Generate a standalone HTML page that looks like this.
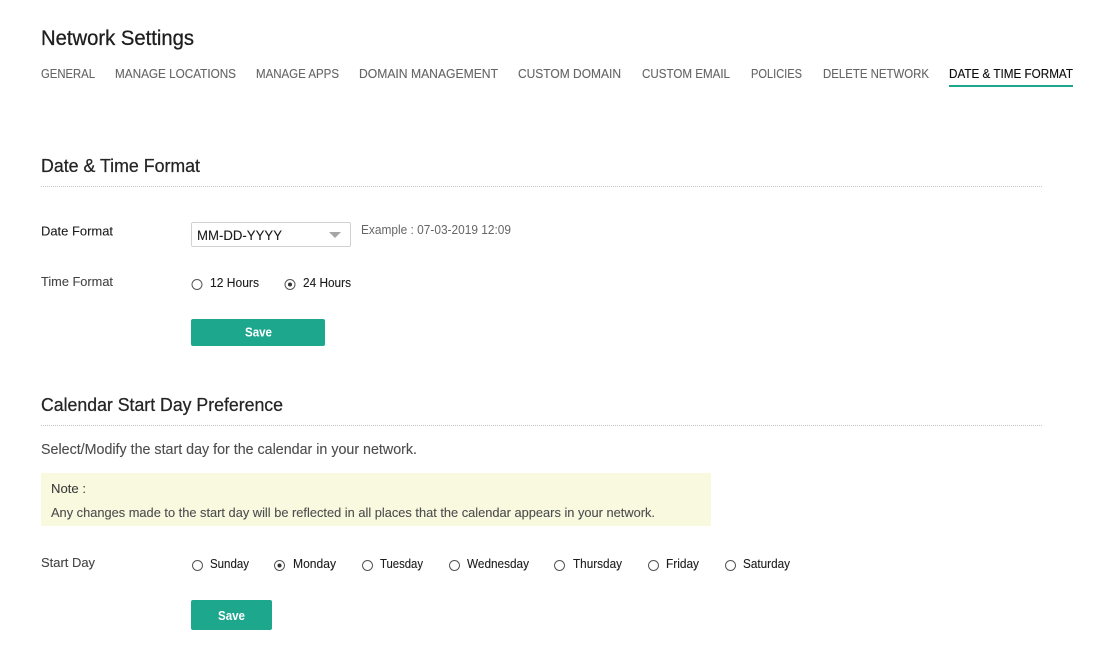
<!DOCTYPE html>
<html>
<head>
<meta charset="utf-8">
<title>Network Settings</title>
<style>
html,body{margin:0;padding:0;background:#fff;width:1105px;height:652px;overflow:hidden}
svg{display:block}
text{font-family:"Liberation Sans",sans-serif}
.tab{font-size:12.6px;fill:#666;stroke:#666;stroke-width:.12px}
.lbl{font-size:13px;fill:#444;stroke:#444;stroke-width:.1px}
.opt{font-size:12.5px;fill:#1c1c1c;stroke:#1c1c1c;stroke-width:.1px}
.h{font-size:18px;fill:#252525;stroke:#252525;stroke-width:.25px}
.sv{font-size:13px;font-weight:bold;fill:#fff}
</style>
</head>
<body>
<svg width="1105" height="652" viewBox="0 0 1105 652" xmlns="http://www.w3.org/2000/svg">
<rect width="1105" height="652" fill="#fff"/>
<text x="41" y="45" font-size="21" fill="#1e1e1e" stroke="#1e1e1e" stroke-width=".3" textLength="153" lengthAdjust="spacingAndGlyphs">Network Settings</text>

<text class="tab" x="41" y="78" textLength="54" lengthAdjust="spacingAndGlyphs">GENERAL</text>
<text class="tab" x="115" y="78" textLength="121" lengthAdjust="spacingAndGlyphs">MANAGE LOCATIONS</text>
<text class="tab" x="256" y="78" textLength="83" lengthAdjust="spacingAndGlyphs">MANAGE APPS</text>
<text class="tab" x="359" y="78" textLength="139" lengthAdjust="spacingAndGlyphs">DOMAIN MANAGEMENT</text>
<text class="tab" x="518" y="78" textLength="103" lengthAdjust="spacingAndGlyphs">CUSTOM DOMAIN</text>
<text class="tab" x="642" y="78" textLength="88" lengthAdjust="spacingAndGlyphs">CUSTOM EMAIL</text>
<text class="tab" x="751" y="78" textLength="51" lengthAdjust="spacingAndGlyphs">POLICIES</text>
<text class="tab" x="823" y="78" textLength="106" lengthAdjust="spacingAndGlyphs">DELETE NETWORK</text>
<text class="tab" x="949" y="78" textLength="124" lengthAdjust="spacingAndGlyphs" style="fill:#0c0c0c;stroke:#0c0c0c">DATE &amp; TIME FORMAT</text>
<rect x="949" y="85" width="124" height="2" fill="#1da88e"/>

<text class="h" x="41" y="172" textLength="159" lengthAdjust="spacingAndGlyphs">Date &amp; Time Format</text>
<line x1="41" y1="186.5" x2="1042" y2="186.500" stroke="#c4c4c4" stroke-width="1" stroke-dasharray="1 1"/>

<text class="lbl" x="41" y="235.500" textLength="72" lengthAdjust="spacingAndGlyphs" style="fill:#1c1c1c;stroke:#1c1c1c">Date Format</text>
<rect x="191.500" y="222.500" width="159" height="24" rx="1.500" fill="#fff" stroke="#d2d2d2"/>
<text x="197" y="240" font-size="13.5" fill="#1c1c1c" stroke="#1c1c1c" stroke-width=".1" textLength="85" lengthAdjust="spacingAndGlyphs">MM-DD-YYYY</text>
<path d="M329 232h12l-6 6z" fill="#a6a6a6"/>
<text x="361" y="234" font-size="12.500" fill="#666" textLength="150" lengthAdjust="spacingAndGlyphs">Example : 07-03-2019 12:09</text>

<text class="lbl" x="41" y="286" textLength="72" lengthAdjust="spacingAndGlyphs">Time Format</text>
<circle cx="197" cy="284.500" r="5" fill="#fff" stroke="#555"/>
<text class="opt" x="210" y="287" textLength="49" lengthAdjust="spacingAndGlyphs">12 Hours</text>
<circle cx="290" cy="284.500" r="5" fill="#fff" stroke="#555"/>
<circle cx="290" cy="284.500" r="2" fill="#333"/>
<text class="opt" x="303" y="287" textLength="48" lengthAdjust="spacingAndGlyphs">24 Hours</text>

<rect x="191" y="319" width="134" height="27" rx="2" fill="#1da88e"/>
<text class="sv" x="245" y="336.500" textLength="27" lengthAdjust="spacingAndGlyphs">Save</text>

<text class="h" x="41" y="411" textLength="242" lengthAdjust="spacingAndGlyphs">Calendar Start Day Preference</text>
<line x1="41" y1="425.500" x2="1042" y2="425.500" stroke="#c4c4c4" stroke-width="1" stroke-dasharray="1 1"/>

<text x="41" y="454" font-size="14.500" fill="#4d4d4d" stroke="#4d4d4d" stroke-width=".1" textLength="376" lengthAdjust="spacingAndGlyphs">Select/Modify the start day for the calendar in your network.</text>

<rect x="41" y="473" width="670" height="53" rx="2" fill="#f9f9e0"/>
<text x="51" y="493" font-size="13" fill="#3c3c3c" stroke="#3c3c3c" stroke-width=".1" textLength="35" lengthAdjust="spacingAndGlyphs">Note :</text>
<text x="51" y="517" font-size="13" fill="#4d4d4d" stroke="#4d4d4d" stroke-width=".1" textLength="604" lengthAdjust="spacingAndGlyphs">Any changes made to the start day will be reflected in all places that the calendar appears in your network.</text>

<text class="lbl" x="41" y="567" textLength="54" lengthAdjust="spacingAndGlyphs">Start Day</text>

<circle cx="197.500" cy="565.500" r="5" fill="#fff" stroke="#555"/>
<text class="opt" x="210" y="568" textLength="39" lengthAdjust="spacingAndGlyphs">Sunday</text>
<circle cx="279.500" cy="565.500" r="5" fill="#fff" stroke="#555"/>
<circle cx="279.500" cy="565.500" r="2" fill="#333"/>
<text class="opt" x="293" y="568" textLength="43" lengthAdjust="spacingAndGlyphs">Monday</text>
<circle cx="367.500" cy="565.500" r="5" fill="#fff" stroke="#555"/>
<text class="opt" x="380" y="568" textLength="43" lengthAdjust="spacingAndGlyphs">Tuesday</text>
<circle cx="454.500" cy="565.500" r="5" fill="#fff" stroke="#555"/>
<text class="opt" x="467" y="568" textLength="62" lengthAdjust="spacingAndGlyphs">Wednesday</text>
<circle cx="559.500" cy="565.500" r="5" fill="#fff" stroke="#555"/>
<text class="opt" x="573" y="568" textLength="49" lengthAdjust="spacingAndGlyphs">Thursday</text>
<circle cx="653.500" cy="565.500" r="5" fill="#fff" stroke="#555"/>
<text class="opt" x="666" y="568" textLength="33" lengthAdjust="spacingAndGlyphs">Friday</text>
<circle cx="730.500" cy="565.500" r="5" fill="#fff" stroke="#555"/>
<text class="opt" x="743" y="568" textLength="47" lengthAdjust="spacingAndGlyphs">Saturday</text>

<rect x="191" y="600" width="81" height="30" rx="2" fill="#1da88e"/>
<text class="sv" x="218" y="620" textLength="27" lengthAdjust="spacingAndGlyphs">Save</text>
</svg>
</body>
</html>
